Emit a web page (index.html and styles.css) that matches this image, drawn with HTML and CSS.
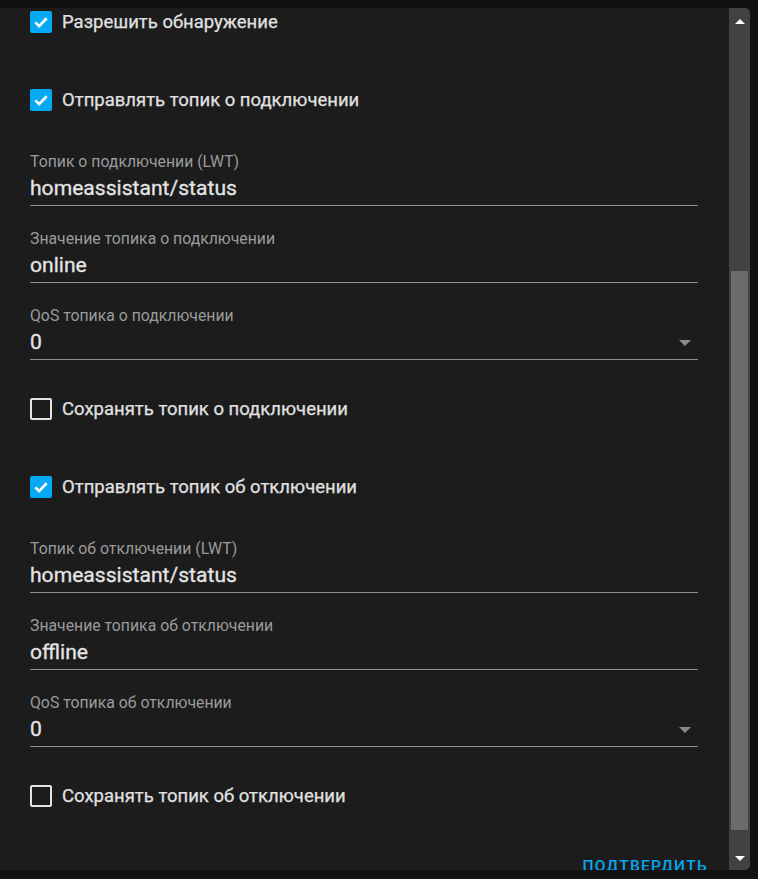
FILE: index.html
```
<!DOCTYPE html>
<html lang="ru">
<head>
    <meta charset="UTF-8">
    <title>MQTT</title>
    <link rel="stylesheet" href="styles.css">
</head>
<body>

<div class="dialog">
    <div class="content">
        <div class="list">
            <label class="check-row">
                <span class="box checked"><svg viewBox="0 0 24 24"><path d="M4.5 12.5l5 5L19.5 7"/></svg></span>
                <span class="check-text">Разрешить обнаружение</span>
            </label>
            <label class="check-row">
                <span class="box checked"><svg viewBox="0 0 24 24"><path d="M4.5 12.5l5 5L19.5 7"/></svg></span>
                <span class="check-text">Отправлять топик о подключении</span>
            </label>

            <div class="field">
                <div class="field-label">Топик о подключении (LWT)</div>
                <div class="field-value">homeassistant/status</div>
            </div>
            <div class="field">
                <div class="field-label">Значение топика о подключении</div>
                <div class="field-value">online</div>
            </div>
            <div class="field select">
                <div class="field-label">QoS топика о подключении</div>
                <div class="field-value">0 <span class="arrow"></span></div>
            </div>

            <label class="check-row">
                <span class="box"></span>
                <span class="check-text">Сохранять топик о подключении</span>
            </label>
            <label class="check-row">
                <span class="box checked"><svg viewBox="0 0 24 24"><path d="M4.5 12.5l5 5L19.5 7"/></svg></span>
                <span class="check-text">Отправлять топик об отключении</span>
            </label>

            <div class="field">
                <div class="field-label">Топик об отключении (LWT)</div>
                <div class="field-value">homeassistant/status</div>
            </div>
            <div class="field">
                <div class="field-label">Значение топика об отключении</div>
                <div class="field-value">offline</div>
            </div>
            <div class="field select">
                <div class="field-label">QoS топика об отключении</div>
                <div class="field-value">0 <span class="arrow"></span></div>
            </div>

            <label class="check-row">
                <span class="box"></span>
                <span class="check-text">Сохранять топик об отключении</span>
            </label>

            <div class="actions">
                <span class="btn">Подтвердить</span>
            </div>
        </div>
    </div>

    <div class="scrollbar">
        <div class="sb-btn"><span class="tri up"></span></div>
        <div class="sb-track"><div class="sb-thumb"></div></div>
        <div class="sb-btn"><span class="tri down"></span></div>
    </div>
</div>

</body>
</html>
```
FILE: styles.css
```
* { margin: 0; padding: 0; box-sizing: border-box; }
html, body { height: 100%; }
body {
    background: #111111;
    font-family: Roboto, "Noto Sans", sans-serif;
    overflow: hidden;
}
.dialog {
    display: flex;
    margin-top: 8px;
    width: 750px;
    height: 862px;
    background: #1c1c1c;
    border-radius: 0 5px 5px 0;
    overflow: hidden;
}
.content {
    flex: 1;
    padding: 0 31px 0 30px;
    overflow: hidden;
}
.list {
    margin-top: -25px;
}
/* чекбоксы */
.check-row {
    display: flex;
    align-items: center;
    height: 78px;
    gap: 10px;
}
.box {
    display: flex;
    align-items: center;
    justify-content: center;
    width: 22px;
    height: 22px;
    border: 2px solid #e3e3e3;
    border-radius: 2px;
}
.box.checked {
    background: #03a9f4;
    border-color: #03a9f4;
}
.box svg {
    width: 22px;
    height: 22px;
    fill: none;
    stroke: #fff;
    stroke-width: 3.6;
}
.check-text {
    color: #e1e1e1;
    font-size: 18.5px;
    font-weight: 400;
    -webkit-text-stroke: 0.25px #e1e1e1;
}
/* поля */
.field {
    height: 67px;
    margin-bottom: 10px;
    padding-top: 13px;
    border-bottom: 1px solid #8f8f8f;
}
.field-label {
    color: #9b9b9b;
    font-size: 15.8px;
    line-height: 20px;
}
.field-value {
    position: relative;
    margin-top: 3px;
    color: #e4e4e4;
    font-size: 21.1px;
    line-height: 26px;
    font-weight: 400;
    -webkit-text-stroke: 0.3px #e4e4e4;
}
.arrow {
    position: absolute;
    right: 7px;
    top: 11px;
    border-left: 6px solid transparent;
    border-right: 6px solid transparent;
    border-top: 6px solid #8a8a8a;
}
.actions {
    display: flex;
    justify-content: flex-end;
    margin-right: -10px;
    padding-top: 22px;
}
.btn {
    color: #03a9f4;
    font-size: 15.5px;
    font-weight: 500;
    letter-spacing: 1.3px;
    text-transform: uppercase;
}
/* полоса прокрутки */
.scrollbar {
    display: flex;
    flex-direction: column;
    width: 21px;
    background: #424242;
}
.sb-btn {
    height: 24px;
    display: flex;
    align-items: center;
    justify-content: center;
}
.sb-btn:first-child { padding-top: 2px; }
.tri {
    border-left: 5px solid transparent;
    border-right: 5px solid transparent;
}
.tri.up { border-bottom: 5px solid #fff; }
.tri.down { border-top: 5px solid #fff; }
.sb-track {
    flex: 1;
    padding: 239px 2px 0 2px;
}
.sb-thumb {
    height: 559px;
    background: #6b6b6b;
}
```
